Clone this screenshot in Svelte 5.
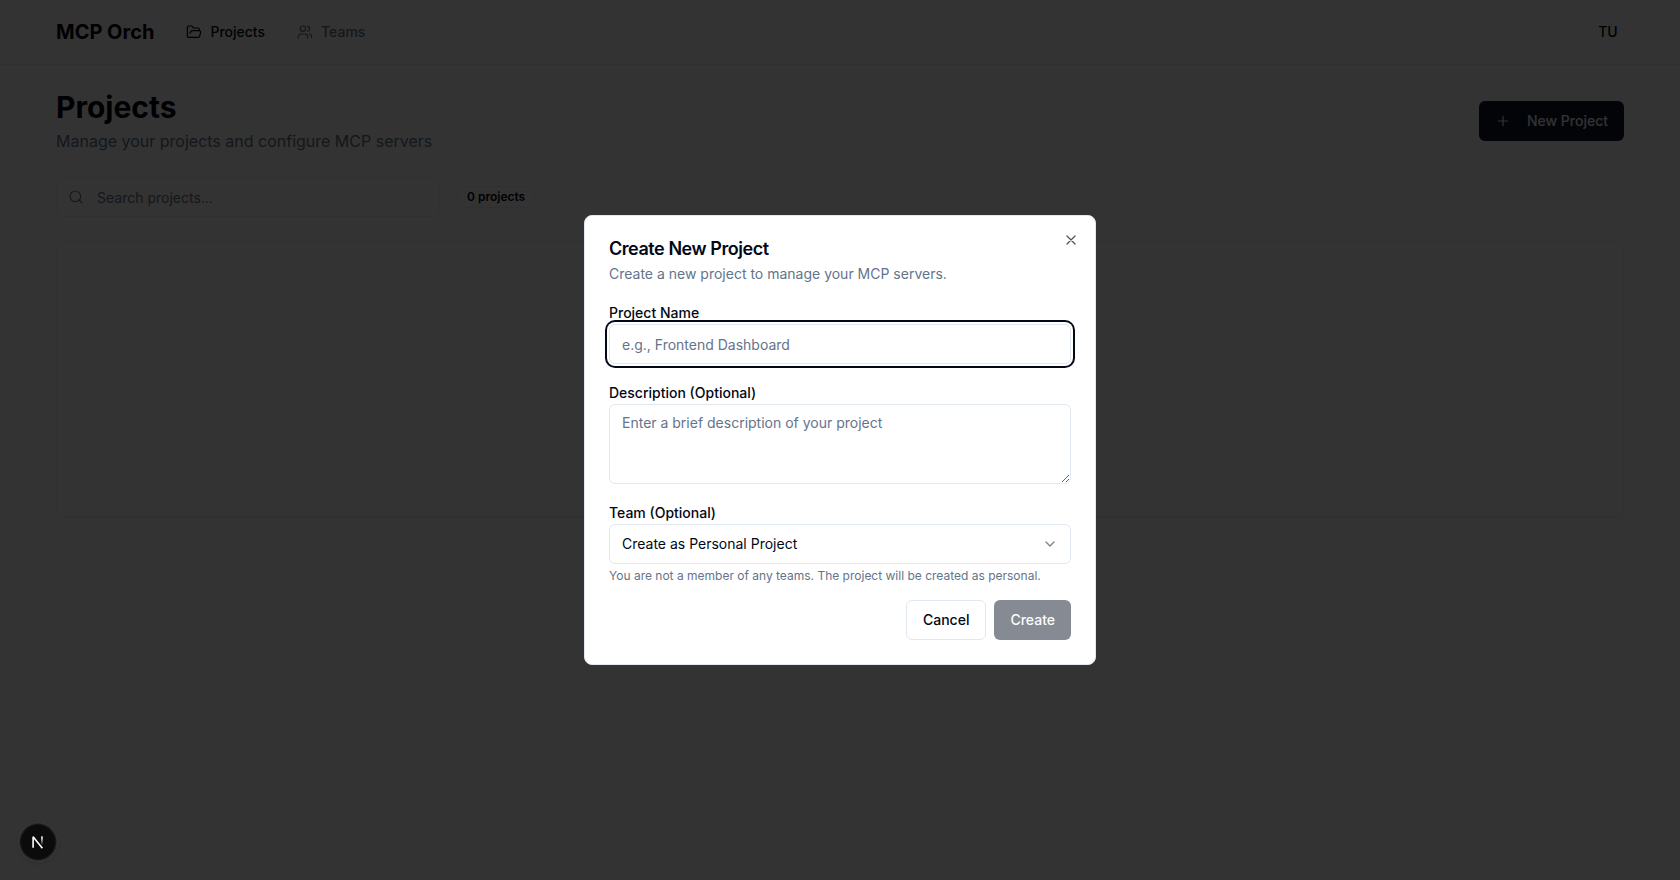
<script>
  let name = $state('');
  let description = $state('');
  let query = $state('');
</script>

<div class="page">
  <header>
    <strong class="brand">MCP Orch</strong>
    <nav>
      <a class="active" href="#projects">
        <svg class="icon" viewBox="0 0 24 24"><path d="m6 14 1.5-2.9A2 2 0 0 1 9.24 10H20a2 2 0 0 1 1.94 2.5l-1.54 6a2 2 0 0 1-1.95 1.5H4a2 2 0 0 1-2-2V5a2 2 0 0 1 2-2h3.9a2 2 0 0 1 1.69.9l.81 1.2a2 2 0 0 0 1.67.9H18a2 2 0 0 1 2 2v2" /></svg>
        <span>Projects</span>
      </a>
      <a href="#teams">
        <svg class="icon" viewBox="0 0 24 24"><path d="M16 21v-2a4 4 0 0 0-4-4H6a4 4 0 0 0-4 4v2" /><circle cx="9" cy="7" r="4" /><path d="M22 21v-2a4 4 0 0 0-3-3.87M16 3.13a4 4 0 0 1 0 7.75" /></svg>
        <span>Teams</span>
      </a>
    </nav>
    <div class="avatar">TU</div>
  </header>

  <main>
    <div class="heading">
      <div>
        <h1>Projects</h1>
        <p>Manage your projects and configure MCP servers</p>
      </div>
      <button class="btn primary new">
        <svg class="icon" viewBox="0 0 24 24"><path d="M5 12h14M12 5v14" /></svg>
        <span>New Project</span>
      </button>
    </div>
    <div class="filters">
      <label class="search">
        <svg class="icon" viewBox="0 0 24 24"><circle cx="11" cy="11" r="8" /><path d="m21 21-4.3-4.3" /></svg>
        <input placeholder="Search projects..." bind:value={query} />
      </label>
      <span class="badge">0 projects</span>
    </div>
    <section class="card"></section>
  </main>
</div>

<div class="overlay">
  <div class="dialog" role="dialog" aria-labelledby="dialog-title">
    <h2 id="dialog-title">Create New Project</h2>
    <p class="lead">Create a new project to manage your MCP servers.</p>
    <form>
      <div class="field">
        <label for="name">Project Name</label>
        <input id="name" class="control focused" placeholder="e.g., Frontend Dashboard" bind:value={name} />
      </div>
      <div class="field">
        <label for="description">Description (Optional)</label>
        <textarea id="description" class="control" placeholder="Enter a brief description of your project" bind:value={description}></textarea>
      </div>
      <div class="field">
        <label for="team">Team (Optional)</label>
        <button id="team" type="button" class="control select">
          <span>Create as Personal Project</span>
          <svg class="icon" viewBox="0 0 24 24"><path d="m6 9 6 6 6-6" /></svg>
        </button>
        <p class="hint">You are not a member of any teams. The project will be created as personal.</p>
      </div>
    </form>
    <footer>
      <button class="btn outline">Cancel</button>
      <button class="btn primary" disabled>Create</button>
    </footer>
    <button class="close" aria-label="Close">
      <svg class="icon" viewBox="0 0 24 24"><path d="M18 6 6 18M6 6l12 12" /></svg>
    </button>
  </div>
</div>

<div class="dev">
  <svg width="14" height="14" viewBox="0 0 14 14" fill="none">
    <defs>
      <linearGradient id="stem" x1="0" y1="0" x2="0" y2="1"><stop offset="0.2" stop-color="#fff" /><stop offset="1" stop-color="#fff" stop-opacity="0" /></linearGradient>
    </defs>
    <path d="M2.1 12.7V1.8L11.4 13.3" stroke="#fff" stroke-width="1.6" stroke-linejoin="bevel" />
    <rect x="10.2" y="1.3" width="1.5" height="9" fill="url(#stem)" />
  </svg>
</div>

<style>
  :global(body) { margin: 0; overflow: hidden; background: #fff; font-family: Inter, "Liberation Sans", sans-serif; color: #020817; font-size: 14px; line-height: 20px; }
  * { box-sizing: border-box; }
  h1, h2, p { margin: 0; }
  button, input, textarea { font: inherit; color: inherit; margin: 0; outline: none; }
  .icon { width: 16px; height: 16px; flex: none; fill: none; stroke: currentColor; stroke-width: 2; stroke-linecap: round; stroke-linejoin: round; }
  .page { height: 880px; color: #02040a; }
  .page .icon { stroke-width: 1.8; }
  header { height: 65px; border-bottom: 1px solid #e9edf2; padding: 0 56px; display: flex; align-items: center; gap: 32px; }
  .brand { font-size: 20px; line-height: 28px; font-weight: 700; }
  nav { display: flex; gap: 32px; flex: 1; }
  nav a { display: flex; align-items: center; gap: 8px; font-weight: 500; color: #64748b; text-decoration: none; }
  nav a.active { color: #020817; }
  .avatar { width: 32px; height: 32px; display: grid; place-items: center; font-weight: 500; }
  main { padding: 24px 56px; display: flex; flex-direction: column; gap: 24px; }
  .heading { display: flex; justify-content: space-between; align-items: center; }
  h1 { font-size: 30px; line-height: 36px; font-weight: 700; }
  .heading p { margin-top: 4px; font-size: 16px; line-height: 24px; color: #64748b; }
  .btn { height: 40px; border-radius: 6px; padding: 0 16px; border: 0; font-weight: 500; display: flex; align-items: center; gap: 16px; }
  .primary { background: #0f172a; color: #f8fafc; }
  .primary:disabled { opacity: 0.5; }
  .outline { border: 1px solid #e2e8f0; background: #fff; }
  .filters { display: flex; gap: 16px; align-items: center; }
  .search { width: 384px; height: 40px; border: 1px solid #eef1f5; border-radius: 6px; padding: 0 12px 0 11px; display: flex; align-items: center; gap: 13px; color: #64748b; }
  .search input { flex: 1; border: 0; padding: 2px 0 0; background: none; }
  ::placeholder { color: #64748b; opacity: 1; }
  .badge { border: 1px solid #eef1f5; border-radius: 11px; padding: 2px 10px; font-size: 12px; line-height: 16px; font-weight: 600; }
  .card { height: 276px; border: 1px solid #eef1f5; border-radius: 8px; box-shadow: 0 1px 2px rgb(0 0 0 / 0.05); }
  .overlay { position: fixed; inset: 0; background: rgb(0 0 0 / 0.8); display: grid; place-items: center; }
  .dialog { position: relative; width: 512px; background: #fff; border: 1px solid #e2e8f0; border-radius: 8px; padding: 24px; }
  h2 { font-size: 18px; line-height: 18px; font-weight: 600; letter-spacing: -0.025em; }
  .lead { margin-top: 6px; color: #64748b; }
  form { display: flex; flex-direction: column; gap: 16px; margin: 16px 0; }
  .field { display: flex; flex-direction: column; }
  .field label { line-height: 24px; font-weight: 500; padding-top: 1px; height: 24px; }
  .control { width: 100%; height: 40px; border: 1px solid #e2e8f0; border-radius: 6px; background: #fff; padding: 8px 12px; }
  textarea.control { height: 80px; display: block; resize: vertical; }
  .focused { box-shadow: 0 0 0 2px #fff, 0 0 0 4px #020817; }
  .select { display: flex; align-items: center; justify-content: space-between; text-align: left; }
  .select .icon { opacity: 0.5; }
  .hint { margin-top: 4px; font-size: 12px; line-height: 16px; color: #64748b; }
  footer { display: flex; justify-content: flex-end; gap: 8px; }
  .close { position: absolute; top: 16px; right: 16px; width: 16px; height: 16px; padding: 0; border: 0; background: none; opacity: 0.7; display: flex; }
  .close .icon { stroke-width: 1.8; }
  .dev { position: fixed; left: 20px; bottom: 20px; width: 36px; height: 36px; border-radius: 50%; background: #0b0b0b; border: 1px solid #171717; box-shadow: 0 0 0 1px #292929, 0 0 0 2px #393939, 0 2px 5px rgb(0 0 0 / 0.2); display: grid; place-items: center; }
</style>
